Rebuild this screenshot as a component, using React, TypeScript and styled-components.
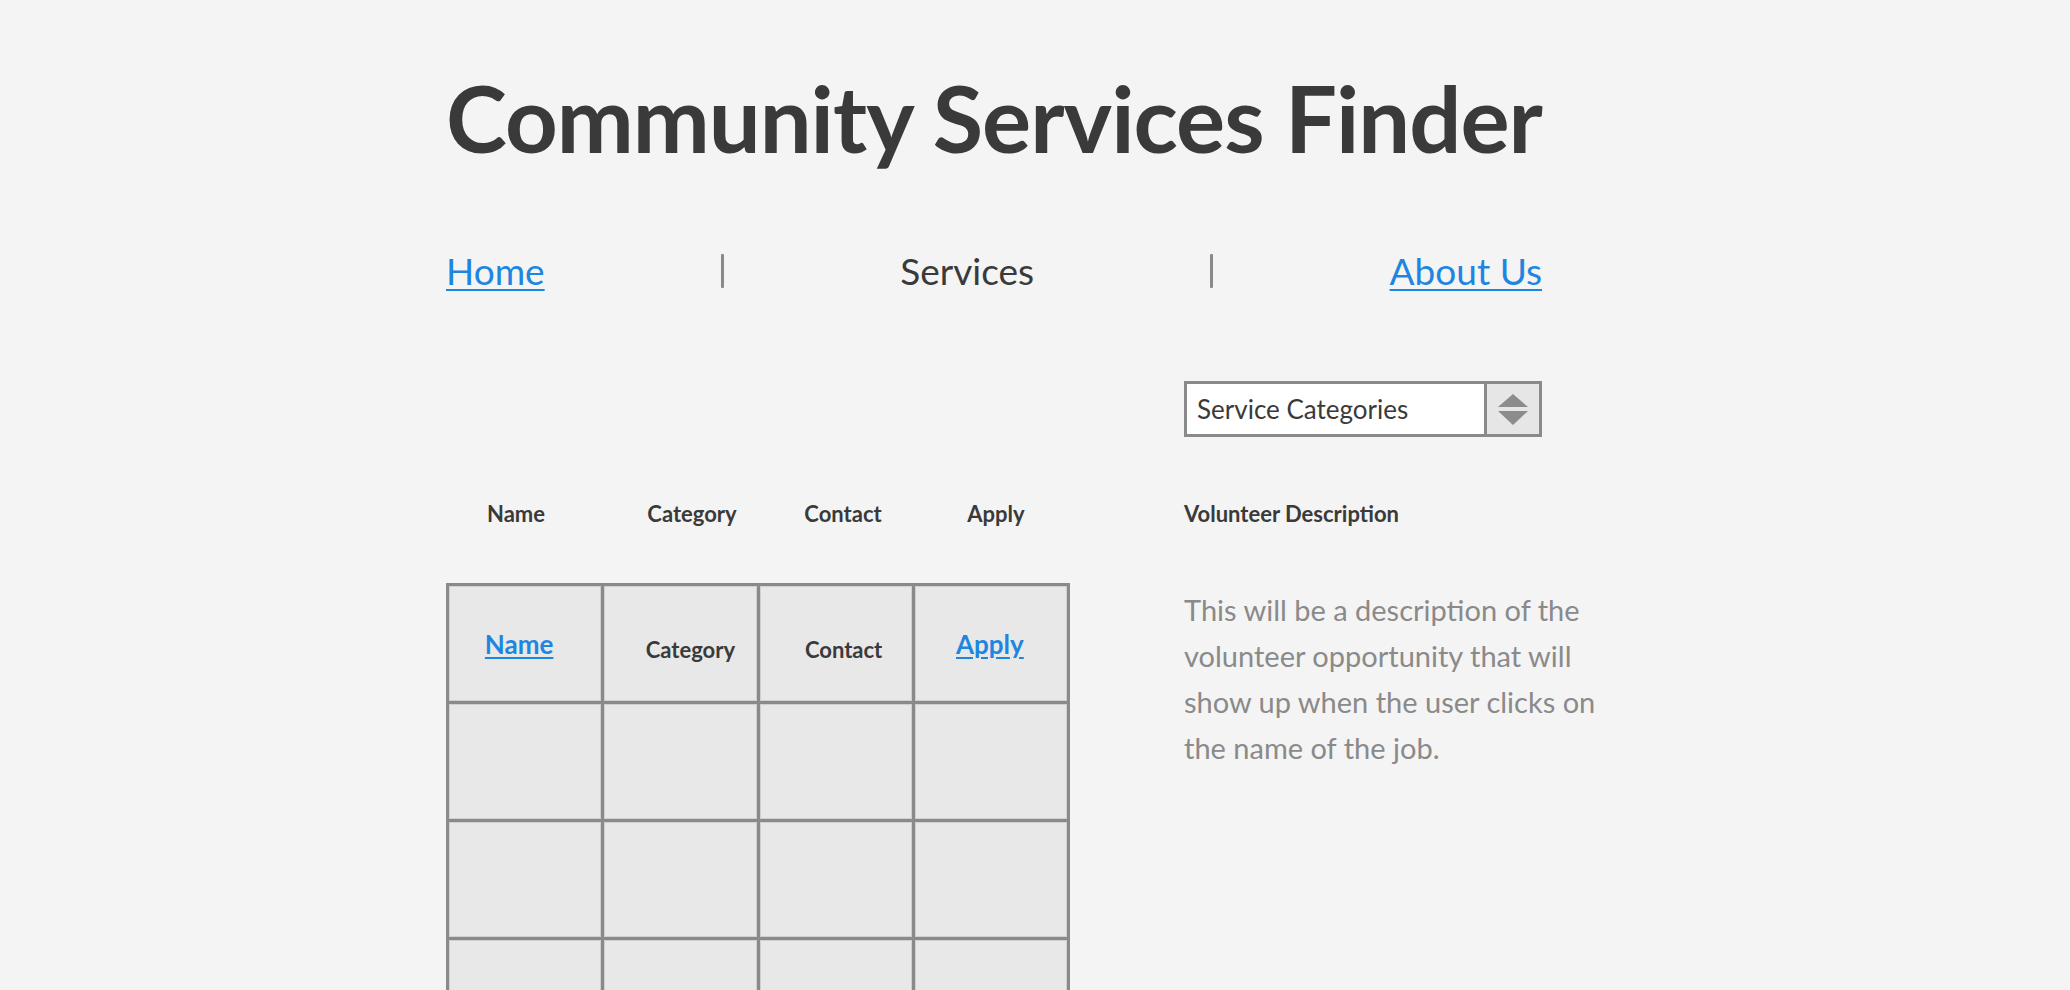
import React from "react";
import styled, { createGlobalStyle } from "styled-components";

const GlobalStyle = createGlobalStyle`
  html, body {
    margin: 0;
    padding: 0;
    background: #f4f4f4;
  }
  body {
    font-family: Lato, "Open Sans", sans-serif;
    color: #3a3a3a;
  }
`;

const Page = styled.div`
  padding: 58px 0 0 446px;
  width: 1160px;
`;

const Title = styled.h1`
  margin: 0;
  font-family: Lato, sans-serif;
  font-weight: 700;
  font-size: 92px;
  line-height: 120px;
  color: #3a3a3a;
  letter-spacing: -1px;
  white-space: nowrap;
`;

const Nav = styled.nav`
  display: flex;
  justify-content: space-between;
  align-items: center;
  width: 1096px;
  margin-top: 71px;
  font-size: 37px;
  line-height: 44px;
`;

const NavLink = styled.a`
  color: #1e86e0;
  text-decoration: underline;
  text-underline-offset: 4px;
  text-decoration-thickness: 2px;
  cursor: pointer;
`;

const NavCurrent = styled.span`
  color: #3a3a3a;
`;

const Separator = styled.span`
  width: 3px;
  height: 34px;
  background: #8a8a8a;
  border-radius: 1px;
`;

const Content = styled.div`
  display: grid;
  grid-template-columns: 624px 358px;
  column-gap: 114px;
  margin-top: 88px;
`;

const Select = styled.div`
  grid-column: 2;
  display: flex;
  height: 56px;
  box-sizing: border-box;
  border: 3px solid #8a8a8a;
  background: #ffffff;
`;

const SelectText = styled.div`
  flex: 1;
  display: flex;
  align-items: center;
  padding-left: 10px;
  font-size: 26px;
  color: #3a3a3a;
`;

const SelectButton = styled.div`
  width: 52px;
  border-left: 3px solid #8a8a8a;
  background: #e6e6e6;
  display: flex;
  align-items: center;
  justify-content: center;
`;

const HeaderRow = styled.div`
  grid-column: 1;
  display: grid;
  grid-template-columns: repeat(4, 156px);
  margin-top: 64px;
  height: 82px;
`;

const HeaderLabel = styled.div<{ $shift: number }>`
  text-align: center;
  font-size: 22px;
  font-weight: 700;
  line-height: 26px;
  color: #3a3a3a;
  transform: translateX(${(p) => p.$shift}px);
`;

const SideLabel = styled.div`
  grid-column: 2;
  margin-top: 64px;
  font-size: 22px;
  font-weight: 700;
  line-height: 26px;
  color: #3a3a3a;
  white-space: nowrap;
`;

const Table = styled.table`
  grid-column: 1;
  border-collapse: collapse;
  width: 624px;
  table-layout: fixed;
`;

const Cell = styled.td`
  border: 3px solid #8a8a8a;
  background: #e8e8e8;
  height: 118px;
  text-align: center;
  vertical-align: middle;
  padding: 14px 0 0 0;
  box-sizing: border-box;
  box-shadow: inset 0 0 0 1px #d0d0d0;
`;

const CellLink = styled.a<{ $shift: number }>`
  display: inline-block;
  font-size: 26px;
  font-weight: 700;
  color: #1e86e0;
  text-decoration: underline;
  text-underline-offset: 3px;
  transform: translate(${(p) => p.$shift}px, -7px);
  cursor: pointer;
`;

const CellText = styled.span<{ $shift: number }>`
  display: inline-block;
  font-size: 22px;
  font-weight: 700;
  color: #3a3a3a;
  transform: translate(${(p) => p.$shift}px, -1px);
`;

const Description = styled.p`
  grid-column: 2;
  margin: 4px 0 0 0;
  width: 440px;
  font-size: 29px;
  line-height: 46px;
  color: #8a8a8a;
`;

const ArrowIcon = () => (
  <svg width="32" height="34" viewBox="0 0 32 34">
    <polygon points="16,2 31,15 1,15" fill="#8c8c8c" />
    <polygon points="1,19 31,19 16,33" fill="#8c8c8c" />
  </svg>
);

export default function App() {
  const emptyRows = [0, 1, 2, 3];
  return (
    <>
      <GlobalStyle />
      <Page>
        <Title>Community Services Finder</Title>
        <Nav>
          <NavLink>Home</NavLink>
          <Separator />
          <NavCurrent>Services</NavCurrent>
          <Separator />
          <NavLink>About Us</NavLink>
        </Nav>
        <Content>
          <Select>
            <SelectText>Service Categories</SelectText>
            <SelectButton>
              <ArrowIcon />
            </SelectButton>
          </Select>
          <HeaderRow>
            <HeaderLabel $shift={-8}>Name</HeaderLabel>
            <HeaderLabel $shift={12}>Category</HeaderLabel>
            <HeaderLabel $shift={7}>Contact</HeaderLabel>
            <HeaderLabel $shift={4}>Apply</HeaderLabel>
          </HeaderRow>
          <SideLabel>Volunteer Description</SideLabel>
          <Table>
            <tbody>
              <tr>
                <Cell>
                  <CellLink $shift={-6}>Name</CellLink>
                </Cell>
                <Cell>
                  <CellText $shift={10}>Category</CellText>
                </Cell>
                <Cell>
                  <CellText $shift={8}>Contact</CellText>
                </Cell>
                <Cell>
                  <CellLink $shift={-1}>Apply</CellLink>
                </Cell>
              </tr>
              {emptyRows.map((r) => (
                <tr key={r}>
                  <Cell />
                  <Cell />
                  <Cell />
                  <Cell />
                </tr>
              ))}
            </tbody>
          </Table>
          <Description>
            This will be a description of the volunteer opportunity that will
            show up when the user clicks on the name of the job.
          </Description>
        </Content>
      </Page>
    </>
  );
}
